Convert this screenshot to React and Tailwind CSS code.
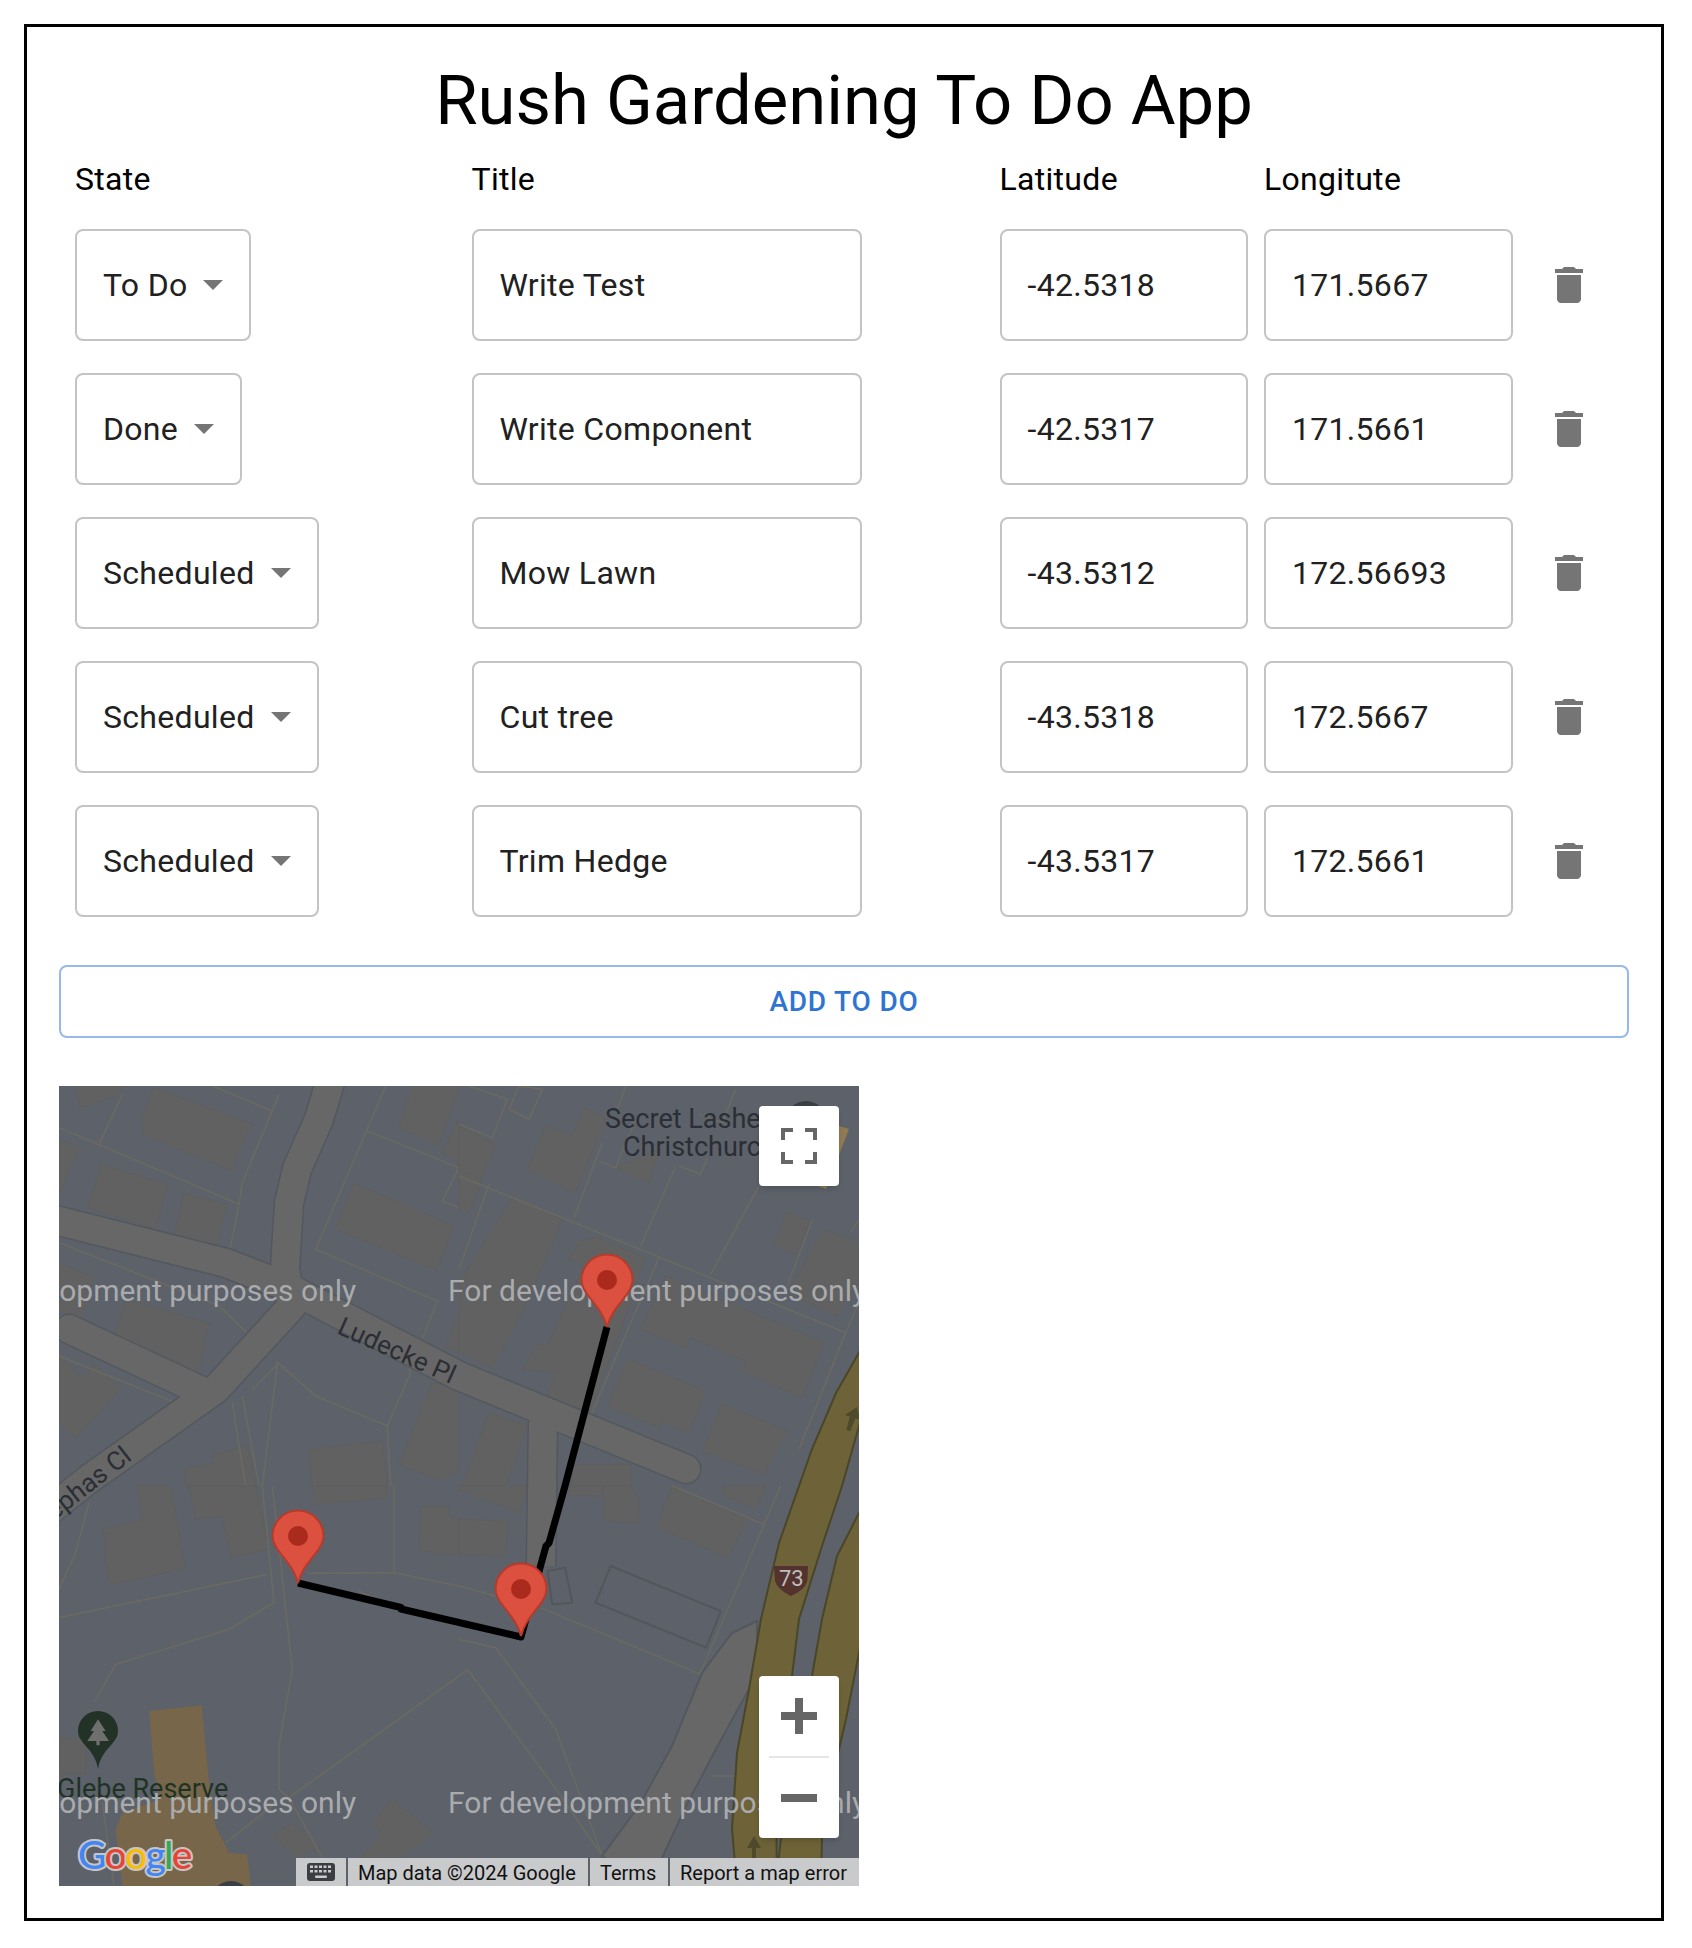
import React from 'react'

const TODOS = [
  { state: 'To Do', title: 'Write Test', lat: '-42.5318', lng: '171.5667' },
  { state: 'Done', title: 'Write Component', lat: '-42.5317', lng: '171.5661' },
  { state: 'Scheduled', title: 'Mow Lawn', lat: '-43.5312', lng: '172.56693' },
  { state: 'Scheduled', title: 'Cut tree', lat: '-43.5318', lng: '172.5667' },
  { state: 'Scheduled', title: 'Trim Hedge', lat: '-43.5317', lng: '172.5661' },
]

// map traced per 400x400 quadrant, points are in 3x crop coordinates
const QUADRANTS = [
  {
    dx: 0,
    dy: 0,
    buildings: [
      '285,5 580,115 540,195 520,255 250,145 250,95',
      '125,235 325,295 290,430 88,365',
      '375,322 503,355 467,505 342,472',
      '885,292 1185,420 1132,553 828,428',
      '1060,0 1020,125 1140,178 1200,10 1200,0',
      '0,160 60,185 5,320 0,320',
      '50,0 195,0 170,30 62,65',
      '0,530 105,575 65,700 0,670',
      '200,640 450,712 430,775 440,780 412,860 168,750',
      '105,835 185,908 50,1055 0,1010 0,810 70,875',
      '752,1090 970,1065 985,1200 760,1200',
      '1120,890 1200,900 1200,1150 1145,1185 1020,1135',
      '460,1105 565,1080 590,1200 378,1200 378,1150 465,1130',
      '1200,100 1150,200 1200,225',
      '1160,780 1200,690 1200,800',
    ],
    lines: [
      '0,125 540,355 505,530',
      '190,25 120,175',
      '460,0 640,75',
      '660,25 550,290 540,355',
      '980,0 770,490 1135,645 1050,860',
      '925,135 1200,245',
      '1200,245 1150,345 1200,365',
      '0,470 480,660 585,760',
      '650,825 770,930 985,1020 1055,860',
      '985,1020 995,1200',
      '580,910 655,835 610,1200',
      '550,930 600,1200',
      '520,950 560,1200',
      '0,810 350,950',
    ],
  },
  {
    dx: 400,
    dy: 0,
    buildings: [
      '205,250 260,120 340,150 375,65 440,95 350,320',
      '160,335 310,400 185,690 100,845 0,800 0,590',
      '360,465 415,455 558,515 490,720 385,995 265,925 290,860 190,850 235,775 265,780 375,540 330,520',
      '620,570 1095,770 1030,935 850,855 860,825 695,755 680,785 545,730',
      '505,818 740,915 690,1040 610,1005 600,1025 447,960',
      '790,955 985,1035 915,1165 730,1095',
      '985,380 1055,405 1010,505 947,475',
      '1095,430 1200,470 1200,590 1130,690 985,620',
      '0,120 110,175 60,290 0,250',
      '90,980 205,1020 140,1200 10,1200',
      '340,1135 515,1135 515,1200 335,1200',
      '0,250 70,280 30,380 0,370',
      '470,245 600,190 570,290 465,240',
    ],
    lines: [
      '30,0 145,40 100,155 0,115',
      '180,0 250,10 210,100 150,70 180,0',
      '0,270 1160,740 1020,1090',
      '90,295 0,550',
      '345,395 430,170',
      '545,480 650,240',
      '755,565 900,300',
      '985,600 1060,400',
      '600,515 390,1000',
      '1160,740 1200,650',
      '420,225 470,245 530,100',
      '660,240 725,265 745,215',
      '830,10 790,110 720,85',
      '500,0 475,70',
      '1200,400 1175,440',
    ],
  },
  {
    dx: 0,
    dy: 400,
    buildings: [
      '235,0 335,0 378,245 155,297 135,205 140,200 133,130 250,100',
      '390,0 590,0 630,190 515,215 490,90 410,100',
      '760,0 980,0 985,35 770,55',
      '1085,60 1170,60 1170,90 1200,95 1200,205 1080,195',
      '0,755 82,755 82,865 0,865',
      '1000,938 1122,1040 1030,1115 910,1115 968,1040 940,1015',
      '700,1010 780,1085 710,1115 640,1050',
    ],
    lines: [
      '0,395 625,265',
      '0,310 50,200 90,50',
      '610,0 645,350 510,430 170,535 105,650',
      '640,0 700,550 660,780 660,910 690,935',
      '1005,0 1005,260',
      '745,262 1005,260 1200,300',
      '900,315 1025,375 1200,420',
      '1200,570 690,935',
      '690,935 790,1115',
      '640,960 500,1070',
      '130,950 165,1200',
    ],
    parks: ['270,675 428,658 450,890 470,1020 510,1100 565,1105 575,1200 190,1200 170,1030 190,980 305,940 285,860'],
  },
  {
    dx: 400,
    dy: 400,
    buildings: [
      '640,5 865,100 805,215 597,125 610,70',
      '0,100 147,105 140,210 0,205',
      '435,0 515,0 540,40 538,110 435,105',
      '335,0 430,0 430,30 330,28',
      '0,10 180,80 210,0 0,0',
      '795,0 920,0 890,70 790,25',
    ],
    lines: [
      '0,300 110,330',
      '245,365 725,565',
      '0,460 110,485 290,730 430,1110',
      '25,550 0,570',
      '25,550 270,880 430,1110',
      '720,570 965,0',
      '640,0 915,115',
      '760,870 830,870',
    ],
    outlined: ['455,240 785,375 742,485 410,350', '265,255 318,245 340,350 280,355'],
  },
]

const ROADS = [
  'M273 -10L260 33L238 83L230 117L226 183L233 220L157 303L30 393L-10 425',
  'M-20 130L167 177L226 200L400 290L627 383',
  'M10 243L147 307',
]

const TrashIcon = () => (
  <svg viewBox="0 0 24 24" className="w-12 h-12 fill-[#757575]">
    <path d="M6 19c0 1.1.9 2 2 2h8c1.1 0 2-.9 2-2V7H6v12zM19 4h-3.5l-1-1h-5l-1 1H5v2h14V4z" />
  </svg>
)

const KeyboardIcon = () => (
  <svg viewBox="0 0 28 18" className="w-7 h-[18px]">
    <rect width="28" height="18" rx="3" fill="#3b3d40" />
    {[3, 7.5, 12, 16.5, 21].map((x) => (
      <g key={x} fill="#c9cacc">
        <rect x={x} y="2.5" width="3" height="2.5" />
        <rect x={x} y="7" width="3" height="2.5" />
      </g>
    ))}
    <rect x="8" y="12.5" width="12" height="2.5" rx="1" fill="#c9cacc" />
  </svg>
)

const Pin = ({ x, y }) => (
  <g transform={`translate(${x} ${y})`}>
    <path
      d="M0 0C-3-12-10-20-17-29C-22-35-25.5-40-25.5-47A25.5 25.5 0 1 1 25.5-47C25.5-40 22-35 17-29C10-20 3-12 0 0Z"
      fill="#dc5040"
      stroke="#b83a2b"
      strokeWidth="2"
    />
    <circle cy="-47" r="10" fill="#ab2a1e" />
  </g>
)

const StateSelect = ({ value }) => (
  <div className="inline-flex items-center h-28 pl-[26px] pr-[26px] gap-[16px] border-2 border-[#c4c4c4] rounded-lg text-[32px] tracking-[0.3px] text-[#212121]">
    <span>{value}</span>
    <span className="w-0 h-0 border-x-[10px] border-x-transparent border-t-[10px] border-t-[#757575]" />
  </div>
)

const TextBox = ({ value, width }) => (
  <div className={`${width} flex items-center h-28 pl-[26px] border-2 border-[#c4c4c4] rounded-lg text-[32px] tracking-[0.3px] text-[#212121]`}>
    {value}
  </div>
)

const MapBase = () => (
  <svg viewBox="0 0 800 800" className="block w-[800px] h-[800px]">
    <rect width="800" height="800" fill="#5c616a" />

    {QUADRANTS.map((q) => (
      <g key={q.dx + '-' + q.dy} transform={`translate(${q.dx} ${q.dy}) scale(0.33333)`}>
        {(q.parks || []).map((p) => (
          <polygon key={p} points={p} fill="#776649" />
        ))}
        {q.buildings.map((p) => (
          <polygon key={p} points={p} fill="#616161" stroke="#5e5e5e" strokeWidth="3" />
        ))}
        {q.lines.map((p) => (
          <polyline key={p} points={p} fill="none" stroke="#6a6a61" strokeWidth="5" />
        ))}
        {(q.outlined || []).map((p) => (
          <polygon key={p} points={p} fill="none" stroke="#53575c" strokeWidth="6" />
        ))}
      </g>
    ))}

    {/* roads: dark casing first, then the fill */}
    <g fill="none" strokeLinecap="round" strokeLinejoin="round">
      <g stroke="#53585f" strokeWidth="31">
        {ROADS.map((d) => (
          <path key={d} d={d} />
        ))}
        <path d="M484 335L482 480" strokeLinecap="butt" />
      </g>
      <g stroke="#676767" strokeWidth="28">
        {ROADS.map((d) => (
          <path key={d} d={d} />
        ))}
        <path d="M484 335L482 480" strokeLinecap="butt" />
      </g>
    </g>
    <polygon
      points="698,535 673,547 643,587 613,660 580,720 543,770 590,800 627,720 657,663 690,603 698,597"
      fill="#676767"
      stroke="#53585f"
      strokeWidth="2"
    />

    {/* motorway */}
    <g fill="#6d6238" stroke="#4a4628" strokeWidth="2">
      <polygon points="802,263 777,307 753,363 740,400 720,457 702,533 690,603 678,667 673,743 678,802 718,802 717,700 733,590 740,533 763,460 783,400 802,333" />
      <polygon points="802,423 778,470 763,533 753,590 730,680 720,770 722,802 762,802 763,750 780,663 787,633 802,557" />
    </g>
    <g fill="#4f4a2b">
      <path d="M795 405L802 416H797L796 430H792L791 416H786Z" transform="translate(-1 -85) rotate(18 793 418)" />
      <path d="M695 750L702 762H697V778H693V762H688Z" />
    </g>

    {/* route shield */}
    <g transform="translate(400 400) scale(0.33333)">
      <path d="M945 240H1047L1045 285Q1040 310 996 330Q955 310 948 285Z" fill="#54332f" />
      <text x="997" y="300" textAnchor="middle" fontSize="66" fill="#bdbdbd">73</text>
    </g>

    {/* poi behind the controls */}
    <circle cx="747" cy="35" r="20" fill="#3b3f45" />
    <polygon points="780,40 790,43 767,103 753,98" fill="#8f7a52" />
    <circle cx="172" cy="815" r="20" fill="#3b3f45" />

    {/* park marker */}
    <path d="M39 683C37 670 30 664 25 658C21 653 19 650 19 645A20 20 0 1 1 59 645C59 650 57 653 53 658C48 664 41 670 39 683Z" fill="#223226" />
    <polygon
      transform="translate(0 400) scale(0.33333)"
      points="117,700 140,735 130,735 150,765 122,765 122,778 112,778 112,765 85,765 105,735 95,735"
      fill="#6f6f6f"
    />

    {/* labels */}
    <g fill="#2b2e34" fontSize="27">
      <text x="546" y="42">Secret Lashes</text>
      <text x="564" y="70">Christchurch</text>
      <text x="277" y="247" transform="rotate(24 277 247)" fontSize="26">Ludecke Pl</text>
      <text x="74" y="373" textAnchor="end" transform="rotate(-38 74 373)" fontSize="26">Cephas Cl</text>
    </g>
    <text x="-2" y="712" fontSize="27" fill="#1f3325">Glebe Reserve</text>

    {/* watermark */}
    <g fill="#a9abae" fontSize="30">
      <text x="-121" y="215">For development purposes only</text>
      <text x="389" y="215">For development purposes only</text>
      <text x="-121" y="727">For development purposes only</text>
      <text x="389" y="727">For development purposes only</text>
    </g>

    {/* route */}
    <polyline points="548,241 506,400 490,457 487,460 462,551 342,523 342,521.5 239,497" fill="none" stroke="#000" strokeWidth="7" strokeLinejoin="round" />
    <Pin x={548} y={241} />
    <Pin x={239} y={497} />
    <Pin x={462} y={550} />

    {/* logo */}
    <text
      x="19"
      y="783"
      fontSize="39"
      fontWeight="500"
      fontFamily="Lato, Roboto, sans-serif"
      stroke="#c6c6c6"
      strokeWidth="4"
      strokeLinejoin="round"
      paintOrder="stroke"
      letterSpacing="-1.7"
    >
      <tspan fill="#4285f4">G</tspan>
      <tspan fill="#ea4335">o</tspan>
      <tspan fill="#fbbc05">o</tspan>
      <tspan fill="#4285f4">g</tspan>
      <tspan fill="#34a853">l</tspan>
      <tspan fill="#ea4335">e</tspan>
    </text>
  </svg>
)

const MapView = () => (
  <div className="relative w-[800px] h-[800px] overflow-hidden">
    <MapBase />

    <button className="absolute left-[700px] top-5 w-20 h-20 flex items-center justify-center bg-white rounded shadow-md">
      <svg viewBox="0 0 18 18" className="w-9 h-9 fill-[#666666]">
        <path d="M0 0v6h2V2h4V0H0zm16 0h-4v2h4v4h2V0h-2zm0 16h-4v2h6v-6h-2v4zM2 12H0v6h6v-2H2v-4z" />
      </svg>
    </button>

    <div className="absolute left-[700px] top-[590px] w-20 flex flex-col items-center bg-white rounded shadow-md">
      <button className="w-20 h-20 flex items-center justify-center">
        <svg viewBox="0 0 18 18" className="w-9 h-9 fill-[#666666]">
          <polygon points="18,7 11,7 11,0 7,0 7,7 0,7 0,11 7,11 7,18 11,18 11,11 18,11" />
        </svg>
      </button>
      <div className="w-[60px] h-[2px] bg-[#e6e6e6]" />
      <button className="w-20 h-20 flex items-center justify-center">
        <svg viewBox="0 0 18 18" className="w-9 h-9 fill-[#666666]">
          <rect y="7" width="18" height="4" />
        </svg>
      </button>
    </div>

    <div className="absolute right-0 bottom-0 flex gap-[2px] h-7 text-[20px] leading-[30px] text-[#111111]">
      <div className="w-[50px] flex items-center justify-center bg-[#c9cacc]">
        <KeyboardIcon />
      </div>
      <div className="w-[240px] pl-[10px] bg-[#c9cacc]">Map data ©2024 Google</div>
      <div className="w-[78px] pl-[10px] bg-[#c9cacc]">Terms</div>
      <div className="w-[189px] pl-[10px] bg-[#c9cacc]">Report a map error</div>
    </div>
  </div>
)

export default function App() {
  return (
    <div className="m-6 w-[1640px] h-[1897px] border-[3px] border-black bg-white px-8 pt-8 font-['Roboto',sans-serif]">
      <h1 className="mt-1 text-center text-[68.8px] leading-[75px] text-black">Rush Gardening To Do App</h1>

      <div className="mt-[17px] pl-4 grid grid-cols-[396.5px_528px_264.5px_280.5px_48px] gap-y-8 items-center">
        <div className="mb-[-6px] text-[32px] leading-[48px] tracking-[0.3px] text-black">State</div>
        <div className="mb-[-6px] text-[32px] leading-[48px] tracking-[0.3px] text-black">Title</div>
        <div className="mb-[-6px] text-[32px] leading-[48px] tracking-[0.3px] text-black">Latitude</div>
        <div className="mb-[-6px] col-span-2 text-[32px] leading-[48px] tracking-[0.3px] text-black">Longitute</div>

        {TODOS.map((todo) => (
          <React.Fragment key={todo.title}>
            <div>
              <StateSelect value={todo.state} />
            </div>
            <TextBox value={todo.title} width="w-[390px]" />
            <TextBox value={todo.lat} width="w-[248px]" />
            <TextBox value={todo.lng} width="w-[249px]" />
            <button className="w-12 h-12">
              <TrashIcon />
            </button>
          </React.Fragment>
        ))}
      </div>

      <button className="mt-12 w-[1570px] h-[73px] border-2 border-[#97b8e8] rounded-lg text-[28px] font-medium tracking-[0.8px] text-[#2f74d2]">
        ADD TO DO
      </button>

      <div className="mt-12">
        <MapView />
      </div>
    </div>
  )
}
